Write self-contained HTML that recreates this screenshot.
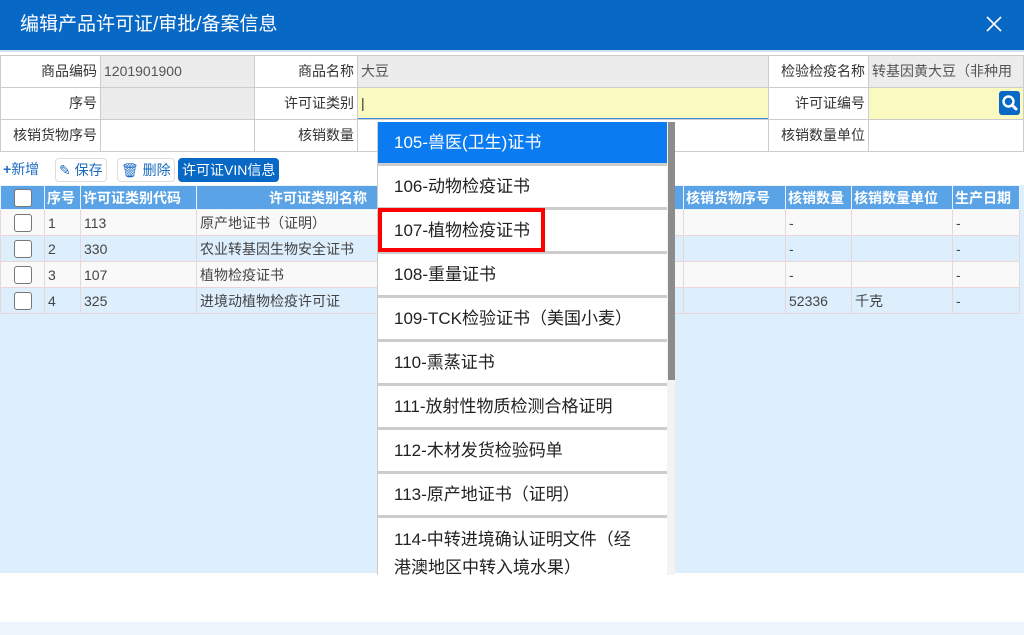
<!DOCTYPE html>
<html><head><meta charset="utf-8"><style>
*{margin:0;padding:0;box-sizing:border-box}
body{width:1024px;height:635px;overflow:hidden;background:#fff;font-family:"Liberation Sans","Noto Sans CJK SC",sans-serif;font-size:14px;color:#333;position:relative}
.abs{position:absolute}
.hdr{left:0;top:0;width:1024px;height:50px;background:#0868c6;color:#fff;font-size:19px;line-height:50px;padding-left:20px}
.cell{position:absolute;border:1px solid #ccc;height:33px;line-height:31px;padding:0 3px;white-space:nowrap;overflow:hidden;font-size:14px}
.lbl{text-align:right;background:#fff}
.val{background:#ececec;color:#555}
.yel{background:#fafac0}
.btn{position:absolute;top:158px;height:24px;border:1px solid #ddd;border-radius:4px;color:#1a6cc0;font-size:14px;line-height:22px;padding:0 3px;background:#fff}
table{position:absolute;left:0;top:185px;border-collapse:collapse;width:1020px;font-size:14px}
th{background:#5aa3e6;color:#fff;height:24px;border:1px solid #eaf2fb;font-weight:bold;white-space:nowrap;text-align:left;padding:0 2px}
td{height:26px;border:1px solid #e9d6d6;padding:0 3px;white-space:nowrap;color:#444}
tr.o td{background:#f9f9f9}tr.e td{background:#ddeefd}
.cb{display:inline-block;width:18px;height:18px;border:1px solid #777;border-radius:3px;background:#fff;vertical-align:middle}
.dd{left:377px;top:122px;width:298px;height:453px;background:#f3f3f3;overflow:hidden;border-left:1px solid #ccc}
.it{position:absolute;left:0;width:289px;background:#fff;border-bottom:3px solid #ccc;font-size:17px;color:#222;padding-left:16px;line-height:42px}
</style></head><body>
<div class="abs hdr">编辑产品许可证/审批/备案信息</div>
<svg class="abs" style="left:985px;top:15px" width="18" height="18" viewBox="0 0 18 18"><path d="M2 2L16 16M16 2L2 16" stroke="#fff" stroke-width="1.6"/></svg>
<div class="abs" style="left:0;top:50px;width:1024px;height:2px;background:#cfe2f5"></div>

<div class="cell lbl" style="left:0;top:55px;width:101px">商品编码</div>
<div class="cell val" style="left:100px;top:55px;width:155px">1201901900</div>
<div class="cell lbl" style="left:254px;top:55px;width:104px">商品名称</div>
<div class="cell val" style="left:357px;top:55px;width:412px">大豆</div>
<div class="cell lbl" style="left:768px;top:55px;width:101px">检验检疫名称</div>
<div class="cell val" style="left:868px;top:55px;width:156px">转基因黄大豆（非种用</div>

<div class="cell lbl" style="left:0;top:87px;width:101px">序号</div>
<div class="cell val" style="left:100px;top:87px;width:155px"></div>
<div class="cell lbl" style="left:254px;top:87px;width:104px">许可证类别</div>
<div class="cell yel" style="left:357px;top:87px;width:412px;border-bottom:2px solid #3a8ee6">|</div>
<div class="cell lbl" style="left:768px;top:87px;width:101px">许可证编号</div>
<div class="cell yel" style="left:868px;top:87px;width:156px"></div>
<svg class="abs" style="left:999px;top:91px" width="21" height="24" viewBox="0 0 21 24"><rect width="21" height="24" rx="3" fill="#0868c6"/><circle cx="9.5" cy="10.5" r="5" fill="none" stroke="#fff" stroke-width="2.4"/><path d="M13 14L17 18" stroke="#fff" stroke-width="3" stroke-linecap="round"/></svg>

<div class="cell lbl" style="left:0;top:119px;width:101px">核销货物序号</div>
<div class="cell" style="left:100px;top:119px;width:155px"></div>
<div class="cell lbl" style="left:254px;top:119px;width:104px">核销数量</div>
<div class="cell" style="left:357px;top:119px;width:412px"></div>
<div class="cell lbl" style="left:768px;top:119px;width:101px">核销数量单位</div>
<div class="cell" style="left:868px;top:119px;width:156px"></div>

<div class="btn" style="left:0;border:none"><b>+</b>新增</div>
<div class="btn" style="left:55px">✎ 保存</div>
<div class="btn" style="left:117px">🗑︎ 删除</div>
<div class="btn" style="left:178px;background:#0868c6;color:#fff;border-color:#0868c6">许可证VIN信息</div>

<div class="abs" style="left:0;top:185px;width:1024px;height:388px;background:#ddeefd"></div>
<table>
<tr><th style="width:44px;text-align:center"><span class="cb"></span></th><th style="width:36px">序号</th><th style="width:116px">许可证类别代码</th><th style="width:487px;padding-left:72px">许可证类别名称</th><th style="width:102px">核销货物序号</th><th style="width:66px">核销数量</th><th style="width:101px">核销数量单位</th><th>生产日期</th></tr>
<tr class="o"><td style="text-align:center"><span class="cb"></span></td><td>1</td><td>113</td><td>原产地证书（证明）</td><td></td><td>-</td><td></td><td>-</td></tr>
<tr class="e"><td style="text-align:center"><span class="cb"></span></td><td>2</td><td>330</td><td>农业转基因生物安全证书</td><td></td><td>-</td><td></td><td>-</td></tr>
<tr class="o"><td style="text-align:center"><span class="cb"></span></td><td>3</td><td>107</td><td>植物检疫证书</td><td></td><td>-</td><td></td><td>-</td></tr>
<tr class="e"><td style="text-align:center"><span class="cb"></span></td><td>4</td><td>325</td><td>进境动植物检疫许可证</td><td></td><td>52336</td><td>千克</td><td>-</td></tr>
</table>
<div class="abs" style="left:0;top:622px;width:1024px;height:13px;background:#eef5fc"></div>

<div class="abs dd">
<div class="it" style="top:0;height:44px;background:#0a7bf0;color:#fff">105-兽医(卫生)证书</div>
<div class="it" style="top:44px;height:44px">106-动物检疫证书</div>
<div class="it" style="top:88px;height:44px">107-植物检疫证书</div>
<div class="it" style="top:132px;height:44px">108-重量证书</div>
<div class="it" style="top:176px;height:44px">109-TCK检验证书（美国小麦）</div>
<div class="it" style="top:220px;height:44px">110-熏蒸证书</div>
<div class="it" style="top:264px;height:44px">111-放射性物质检测合格证明</div>
<div class="it" style="top:308px;height:44px">112-木材发货检验码单</div>
<div class="it" style="top:352px;height:44px">113-原产地证书（证明）</div>
<div class="it" style="top:396px;height:70px;line-height:28px;padding-top:8px;white-space:normal;padding-right:26px">114-中转进境确认证明文件（经港澳地区中转入境水果）</div>
<div class="abs" style="left:290px;top:0;width:8px;height:258px;background:#8c8c8c"></div>
</div>
<div class="abs" style="left:378px;top:208px;width:167px;height:44px;border:4px solid #f00"></div>
</body></html>
